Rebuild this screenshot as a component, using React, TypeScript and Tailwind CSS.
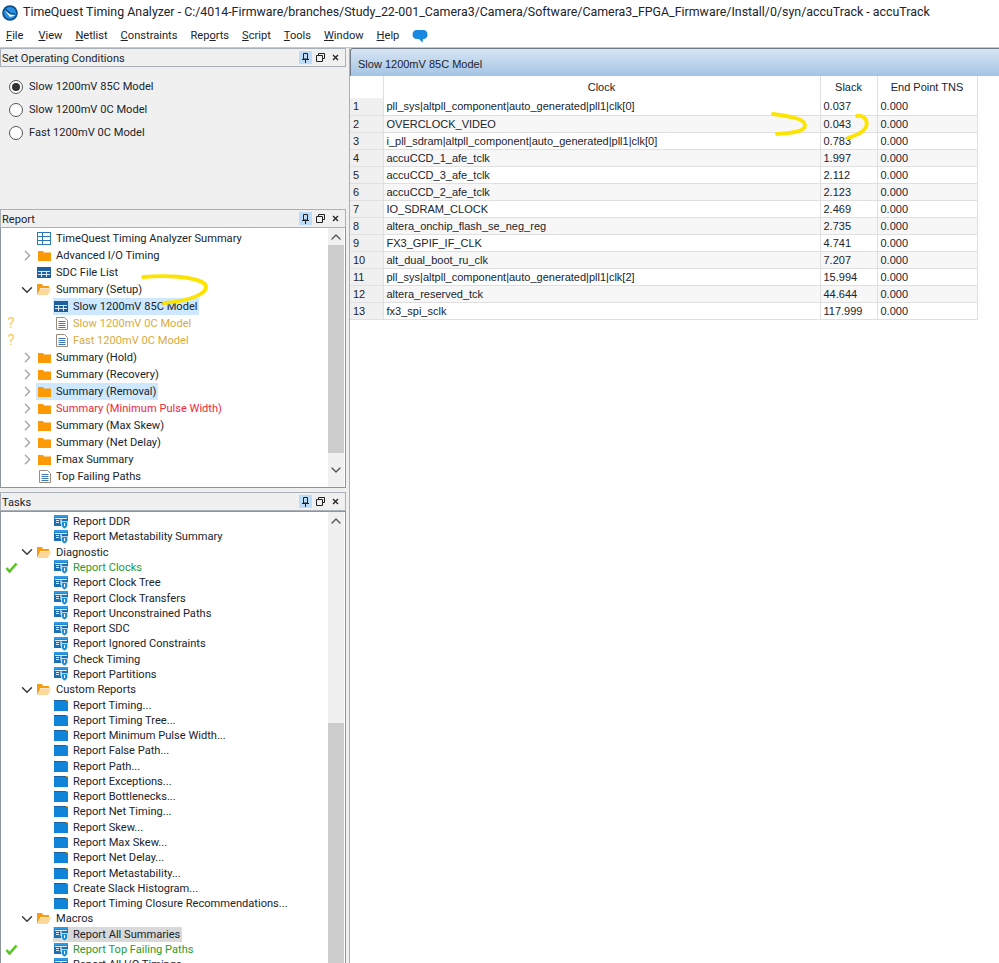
import React from 'react'
import { ChevronDown, ChevronRight, ChevronUp } from 'lucide-react'

type Icon = 'grid' | 'table' | 'open' | 'closed' | 'doc' | 'task' | 'plain' | 'none'

type Row = {
    label: string
    icon: Icon
    depth: number
    arrow?: 'open' | 'closed'
    tone?: 'warn' | 'red' | 'green'
    mark?: 'warn' | 'ok'
    hl?: 'blue' | 'gray'
}

const reportRows: Row[] = [
    { label: 'TimeQuest Timing Analyzer Summary', icon: 'grid', depth: 0 },
    { label: 'Advanced I/O Timing', icon: 'closed', depth: 0, arrow: 'closed' },
    { label: 'SDC File List', icon: 'table', depth: 0 },
    { label: 'Summary (Setup)', icon: 'open', depth: 0, arrow: 'open' },
    { label: 'Slow 1200mV 85C Model', icon: 'table', depth: 1, hl: 'blue' },
    { label: 'Slow 1200mV 0C Model', icon: 'doc', depth: 1, tone: 'warn', mark: 'warn' },
    { label: 'Fast 1200mV 0C Model', icon: 'doc', depth: 1, tone: 'warn', mark: 'warn' },
    { label: 'Summary (Hold)', icon: 'closed', depth: 0, arrow: 'closed' },
    { label: 'Summary (Recovery)', icon: 'closed', depth: 0, arrow: 'closed' },
    { label: 'Summary (Removal)', icon: 'closed', depth: 0, arrow: 'closed', hl: 'blue' },
    { label: 'Summary (Minimum Pulse Width)', icon: 'closed', depth: 0, arrow: 'closed', tone: 'red' },
    { label: 'Summary (Max Skew)', icon: 'closed', depth: 0, arrow: 'closed' },
    { label: 'Summary (Net Delay)', icon: 'closed', depth: 0, arrow: 'closed' },
    { label: 'Fmax Summary', icon: 'closed', depth: 0, arrow: 'closed' },
    { label: 'Top Failing Paths', icon: 'doc', depth: 0 },
]

const customReports = [
    'Report Timing...',
    'Report Timing Tree...',
    'Report Minimum Pulse Width...',
    'Report False Path...',
    'Report Path...',
    'Report Exceptions...',
    'Report Bottlenecks...',
    'Report Net Timing...',
    'Report Skew...',
    'Report Max Skew...',
    'Report Net Delay...',
    'Report Metastability...',
    'Create Slack Histogram...',
    'Report Timing Closure Recommendations...',
]

const taskRows: Row[] = [
    { label: 'Report DDR', icon: 'task', depth: 1 },
    { label: 'Report Metastability Summary', icon: 'task', depth: 1 },
    { label: 'Diagnostic', icon: 'open', depth: 0, arrow: 'open' },
    { label: 'Report Clocks', icon: 'task', depth: 1, tone: 'green', mark: 'ok' },
    { label: 'Report Clock Tree', icon: 'task', depth: 1 },
    { label: 'Report Clock Transfers', icon: 'task', depth: 1 },
    { label: 'Report Unconstrained Paths', icon: 'task', depth: 1 },
    { label: 'Report SDC', icon: 'task', depth: 1 },
    { label: 'Report Ignored Constraints', icon: 'task', depth: 1 },
    { label: 'Check Timing', icon: 'task', depth: 1 },
    { label: 'Report Partitions', icon: 'task', depth: 1 },
    { label: 'Custom Reports', icon: 'open', depth: 0, arrow: 'open' },
    ...customReports.map((label): Row => ({ label, icon: 'plain', depth: 1 })),
    { label: 'Macros', icon: 'open', depth: 0, arrow: 'open' },
    { label: 'Report All Summaries', icon: 'task', depth: 1, hl: 'gray' },
    { label: 'Report Top Failing Paths', icon: 'task', depth: 1, tone: 'green', mark: 'ok' },
    { label: 'Report All I/O Timings', icon: 'task', depth: 1 },
]

const clocks = [
    ['pll_sys|altpll_component|auto_generated|pll1|clk[0]', '0.037'],
    ['OVERCLOCK_VIDEO', '0.043'],
    ['i_pll_sdram|altpll_component|auto_generated|pll1|clk[0]', '0.783'],
    ['accuCCD_1_afe_tclk', '1.997'],
    ['accuCCD_3_afe_tclk', '2.112'],
    ['accuCCD_2_afe_tclk', '2.123'],
    ['IO_SDRAM_CLOCK', '2.469'],
    ['altera_onchip_flash_se_neg_reg', '2.735'],
    ['FX3_GPIF_IF_CLK', '4.741'],
    ['alt_dual_boot_ru_clk', '7.207'],
    ['pll_sys|altpll_component|auto_generated|pll1|clk[2]', '15.994'],
    ['altera_reserved_tck', '44.644'],
    ['fx3_spi_sclk', '117.999'],
]

const menus = [
    ['F', 'ile'],
    ['V', 'iew'],
    ['N', 'etlist'],
    ['C', 'onstraints'],
    ['Rep', 'o', 'rts'],
    ['S', 'cript'],
    ['T', 'ools'],
    ['W', 'indow'],
    ['H', 'elp'],
]

const TreeIcon = ({ kind }: { kind: Icon }) => {
    if (kind === 'grid') {
        return (
            <svg width="14" height="13" viewBox="0 0 14 13" className="shrink-0">
                <rect x="0.5" y="0.5" width="13" height="12" fill="#fff" stroke="#2b79b9" />
                <path d="M0.5 4.5H13.5M0.5 8.5H13.5M5.5 0.5V12.5" stroke="#2b79b9" fill="none" />
            </svg>
        )
    }
    if (kind === 'table') {
        return (
            <svg width="14" height="11" viewBox="0 0 14 11" className="shrink-0">
                <rect x="0" y="0" width="14" height="11" fill="#1d5f9f" />
                <path d="M1 4.5H13M1 7.5H13" stroke="#d9e8f5" fill="none" />
                <path d="M4.5 4V10M9.5 4V10" stroke="#d9e8f5" fill="none" />
            </svg>
        )
    }
    if (kind === 'open') {
        return (
            <svg width="14" height="11" viewBox="0 0 14 11" className="shrink-0">
                <path d="M0 0H5L6 2H12V4H3.5L0 11Z" fill="#f59c12" />
                <path d="M0.5 11L3.5 4.5H14L11 11Z" fill="#fbd89a" />
            </svg>
        )
    }
    if (kind === 'closed') {
        return (
            <svg width="13" height="10" viewBox="0 0 13 10" className="shrink-0">
                <path d="M0 0H5L6 1.5H13V10H0Z" fill="#fb9a06" />
            </svg>
        )
    }
    if (kind === 'doc') {
        return (
            <svg width="12" height="13" viewBox="0 0 12 13" className="shrink-0 ml-[1px]">
                <path d="M0.5 0.5H8.5L11.5 3.5V12.5H0.5Z" fill="#fff" stroke="#9d8b7d" />
                <path d="M2.5 4.5H9.5M2.5 6.5H9.5M2.5 8.5H9.5M2.5 10.5H9.5" stroke="#3f78b5" fill="none" />
            </svg>
        )
    }
    if (kind === 'task') {
        return (
            <svg width="14" height="14" viewBox="0 0 14 14" className="shrink-0">
                <rect x="0" y="0" width="14" height="11" fill="#1c6fb3" />
                <rect x="0" y="0" width="14" height="2.5" fill="#2f9be6" />
                <path d="M1 3.5H13M2 5.5H5M2 7.5H5" stroke="#dcecf8" fill="none" />
                <path d="M6 5H8M7 5V9" stroke="#dcecf8" fill="none" />
                <path d="M7.5 6.5H13.5V10C13.5 12 12 13.2 10.5 13.8C9 13.2 7.5 12 7.5 10Z" fill="#1c8ed8" stroke="#fff" strokeWidth="0.7" />
                <path d="M10.5 8V11" stroke="#fff" fill="none" />
            </svg>
        )
    }
    if (kind === 'plain') {
        return (
            <svg width="14" height="11" viewBox="0 0 14 11" className="shrink-0">
                <rect x="0" y="0" width="14" height="11" fill="#0f84d8" />
                <rect x="0" y="0" width="14" height="1" fill="#1d5f9f" />
                <rect x="12" y="0" width="2" height="1" fill="#e8b23a" />
            </svg>
        )
    }
    return null
}

const TreeRow = ({ row, height }: { row: Row; height: string }) => {
    const tone = row.tone === 'warn' ? 'text-[#d9ab3f]' : row.tone === 'red' ? 'text-[#f0283a]' : row.tone === 'green' ? 'text-[#2c9a2c]' : 'text-[#20242c]'
    const hl = row.hl === 'blue' ? 'bg-[#cde8ff]' : row.hl === 'gray' ? 'bg-[#d9d9d9]' : ''
    return (
        <div className={`flex items-center ${height}`}>
            <div className="w-[19px] shrink-0 flex justify-center pl-[1px] leading-none">
                {row.mark === 'warn' && <span className="text-[#f7c766] text-[15px] leading-[15px]">?</span>}
                {row.mark === 'ok' && (
                    <svg width="13" height="11" viewBox="0 0 13 11">
                        <path d="M1.5 6L4.5 9.5L11.5 1.5" stroke="#55c61e" strokeWidth="2.6" fill="none" />
                    </svg>
                )}
            </div>
            <div className="w-[16px] shrink-0 flex justify-center pr-[2px]">
                {row.arrow === 'open' && <ChevronDown size={18} strokeWidth={2} className="text-[#3c3c3c] shrink-0" />}
                {row.arrow === 'closed' && <ChevronRight size={17} strokeWidth={2} className="text-[#a6a6a6] shrink-0" />}
            </div>
            <div className={`flex items-center h-full pr-[2px] ${hl} ${row.depth === 1 ? 'ml-[17px] pl-[1px] gap-[5px]' : 'ml-0 pl-[1px] gap-[5px]'}`}>
                <div className="w-[14px] flex justify-center">
                    <TreeIcon kind={row.icon} />
                </div>
                <span className={`whitespace-nowrap leading-[13px] ${tone}`}>{row.label}</span>
            </div>
        </div>
    )
}

const DockButtons = () => (
    <div className="flex items-center gap-[3px] pr-[3px]">
        <div className="w-[13px] h-[13px] bg-[#bcdcf7] flex items-center justify-center">
            <svg width="7" height="10" viewBox="0 0 7 10">
                <path d="M1.5 0.5H5.5V6H1.5ZM0 6.5H7M3.5 6.5V10" stroke="#222" fill="none" />
            </svg>
        </div>
        <svg width="9" height="9" viewBox="0 0 9 9" className="mx-[1px]">
            <path d="M2.5 2.5V0.5H8.5V5.5H6.5M0.5 2.5H6.5V8.5H0.5Z" stroke="#222" fill="none" />
        </svg>
        <svg width="13" height="7" viewBox="0 0 13 7">
            <path d="M4 1L9 6M9 1L4 6" stroke="#222" strokeWidth="1.3" fill="none" />
        </svg>
    </div>
)

const PanelHeader = ({ title }: { title: string }) => (
    <div className="h-[19px] flex items-center justify-between border border-[#a9b0b8] bg-[#f0f0f0] pl-[1px] shrink-0">
        <span className="text-[#20242c] leading-none pt-[2px]">{title}</span>
        <DockButtons />
    </div>
)

const Scrollbar = ({ spacer, thumb, bottom = true }: { spacer: string; thumb: string; bottom?: boolean }) => (
    <div className="w-[16px] shrink-0 mr-[1px] flex flex-col bg-[#f0f0f0] items-center">
        <div className="h-[17px] flex items-center justify-center shrink-0">
            <ChevronUp size={16} strokeWidth={2} className="text-[#555]" />
        </div>
        <div className={`w-full shrink-0 ${spacer}`} />
        <div className={`w-full shrink-0 bg-[#cdcdcd] ${thumb}`} />
        {bottom && (
            <div className="flex-1 flex items-center justify-center">
                <ChevronDown size={16} strokeWidth={2} className="text-[#555]" />
            </div>
        )}
    </div>
)

const Radio = ({ label, on }: { label: string; on?: boolean }) => (
    <div className="flex items-center h-[23px] gap-[6px]">
        <div className="w-[14px] h-[14px] rounded-full border border-[#555] bg-white flex items-center justify-center">
            {on && <div className="w-[8px] h-[8px] rounded-full bg-[#333]" />}
        </div>
        <span className="text-[#20242c] pt-[1px]">{label}</span>
    </div>
)

export default function App() {
    return (
        <div className="relative w-[999px] h-[963px] overflow-hidden bg-white font-['Roboto','Liberation_Sans',sans-serif] text-[11.1px]">
            {/* Title bar */}
            <div className="h-[25px] flex items-center pl-[2px] gap-[5px] bg-white">
                <svg width="16" height="16" viewBox="0 0 16 16" className="shrink-0">
                    <circle cx="8" cy="8" r="7.8" fill="#0d4f8f" />
                    <circle cx="8" cy="8" r="6" fill="#2a8fe0" />
                    <path d="M2.5 5L8 9.5L13.5 10.5L8 12Z" fill="#fff" />
                    <path d="M3.5 4.5L8.5 8.5L13 9" stroke="#0c3f73" strokeWidth="1.2" fill="none" />
                </svg>
                <span className="text-[12.4px] text-[#20242c] whitespace-nowrap">
                    TimeQuest Timing Analyzer - C:/4014-Firmware/branches/Study_22-001_Camera3/Camera/Software/Camera3_FPGA_Firmware/Install/0/syn/accuTrack - accuTrack
                </span>
            </div>

            {/* Menu bar */}
            <div className="h-[22px] flex items-center pl-[6px] gap-[13px] bg-white">
                {menus.map((m, i) => (
                    <span key={m.join('')} className={i === 0 ? 'text-[#20242c] mr-[2px]' : 'text-[#20242c]'}>
                        {m.length === 3 ? (
                            <>
                                {m[0]}
                                <span className="underline">{m[1]}</span>
                                {m[2]}
                            </>
                        ) : (
                            <>
                                <span className="underline">{m[0]}</span>
                                {m[1]}
                            </>
                        )}
                    </span>
                ))}
                <svg width="16" height="15" viewBox="0 0 16 15" className="shrink-0">
                    <path d="M5 1H11C14 1 15.5 3 15.5 5.5C15.5 8 14 10 11 10L10.5 13.5L7 10H5C2 10 0.5 8 0.5 5.5C0.5 3 2 1 5 1Z" fill="#1888e0" />
                </svg>
            </div>

            {/* Main split */}
            <div className="flex h-[916px] border-t border-[#c8c8c8]">
                {/* Left docks */}
                <div className="w-[346px] flex flex-col shrink-0">
                    <div className="h-[161px] bg-[#f0f0f0] flex flex-col">
                        <PanelHeader title="Set Operating Conditions" />
                        <div className="pl-[9px] pt-[8px]">
                            <Radio label="Slow 1200mV 85C Model" on />
                            <Radio label="Slow 1200mV 0C Model" />
                            <Radio label="Fast 1200mV 0C Model" />
                        </div>
                    </div>
                    <div className="h-[279px] flex flex-col bg-[#f0f0f0]">
                        <PanelHeader title="Report" />
                        <div className="flex flex-1 border border-t-0 border-[#8f959c] bg-white min-h-0 overflow-hidden">
                            <div className="flex-1 pt-[2px] min-w-0">
                                {reportRows.map((r) => (
                                    <TreeRow key={r.label + r.icon + r.depth} row={r} height="h-[17px]" />
                                ))}
                            </div>
                            <Scrollbar spacer="h-0" thumb="h-[208px]" />
                        </div>
                    </div>
                    <div className="flex-1 flex flex-col bg-[#f0f0f0] pt-[4px] min-h-0">
                        <PanelHeader title="Tasks" />
                        <div className="flex flex-1 border-l border-r border-t border-[#8f959c] bg-white min-h-0 overflow-hidden">
                            <div className="flex-1 pt-[2px] min-w-0">
                                {taskRows.map((r) => (
                                    <TreeRow key={r.label} row={r} height="h-[15.29px]" />
                                ))}
                            </div>
                            <Scrollbar spacer="h-[194px]" thumb="h-[260px]" bottom={false} />
                        </div>
                    </div>
                </div>

                {/* Splitter */}
                <div className="w-[4px] bg-[#f0f0f0] border-r border-[#a9b0b8] shrink-0" />

                {/* Right pane */}
                <div className="flex-1 min-w-0 flex flex-col">
                    <div className="h-[28px] flex items-center pl-[7px] pt-[3px] rounded-tl-[3px] border-t border-l border-[#6f7b88] bg-gradient-to-b from-[#d8e6f4] to-[#a3c3e3] shrink-0">
                        <span className="font-['Liberation_Sans',sans-serif] text-[11px] text-[#20242c]">Slow 1200mV 85C Model</span>
                    </div>
                    <table className="w-[627px] table-fixed border-collapse font-['Liberation_Sans',sans-serif] text-[11px] leading-[14px] text-[#20242c]">
                        <thead>
                            <tr className="h-[22px]">
                                <th className="w-[33px] font-normal border-r border-[#e0e0e0]" />
                                <th className="w-[437px] font-normal border-r border-[#e0e0e0]">Clock</th>
                                <th className="w-[57px] font-normal border-r border-[#e0e0e0]">Slack</th>
                                <th className="w-[100px] font-normal border-r border-[#e0e0e0]">End Point TNS</th>
                            </tr>
                        </thead>
                        <tbody>
                            {clocks.map(([name, slack], i) => (
                                <tr key={name} className={`h-[17px] border-b border-[#e0e0e0] ${i % 2 === 1 ? 'bg-[#f7f7f7]' : 'bg-white'}`}>
                                    <td className="pl-[3px] bg-[#f0f0f0] border-r border-[#e0e0e0]">{i + 1}</td>
                                    <td className="pl-[3px] border-r border-[#e0e0e0] whitespace-nowrap">{name}</td>
                                    <td className="pl-[3px] border-r border-[#e0e0e0]">{slack}</td>
                                    <td className="pl-[3px] border-r border-[#e0e0e0]">0.000</td>
                                </tr>
                            ))}
                        </tbody>
                    </table>
                </div>
            </div>

            {/* Yellow marker annotations */}
            <svg width="999" height="963" viewBox="0 0 999 963" className="absolute inset-0 pointer-events-none">
                <g stroke="#fde400" strokeWidth="3.8" fill="none" strokeLinecap="round">
                    <path d="M143 277C165 275 195 276 205 284C211 293 190 301 164 303" />
                    <path d="M773 114C790 116 805 119 805 125C806 132 790 133 777 134" />
                    <path d="M857 116C866 115 868 122 866 127C863 133 856 135 848 138" />
                </g>
            </svg>
        </div>
    )
}
